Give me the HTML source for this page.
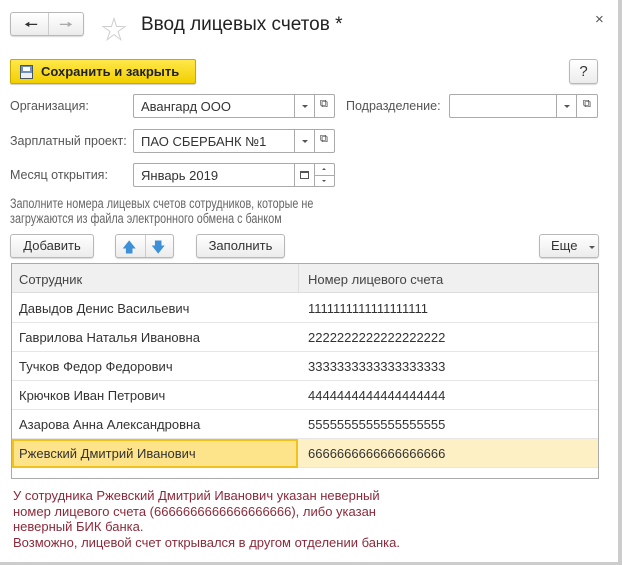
<!DOCTYPE html>
<html><head><meta charset="utf-8"><style>
*{box-sizing:border-box}
body{margin:0;width:622px;height:565px;background:#fff;font-family:"Liberation Sans","Noto Sans CJK SC",sans-serif;font-size:13px;color:#333;position:relative;overflow:hidden}
.a{position:absolute}
.btn{position:absolute;border:1px solid #b8b8b8;border-radius:3px;background:linear-gradient(#fff,#ececec);box-shadow:0 1px 1px rgba(0,0,0,.15);text-align:center;color:#333}
.fld{position:absolute;border:1px solid #aaa;border-radius:2px;background:#fff;height:24px}
.fld span{position:absolute;left:7px;top:4px;color:#333;font-size:13px}
.sep{position:absolute;top:0;bottom:0;border-left:1px solid #aaa}
.lbl{position:absolute;color:#555;font-size:12.5px}
.row{position:absolute;left:12px;width:586px;height:29px;border-bottom:1px solid #e6e6e6}
.row .c1{position:absolute;left:7px;top:7px}
.row .c2{position:absolute;left:296px;top:7px}
.dd{position:absolute;width:0;height:0;border-left:3px solid transparent;border-right:3px solid transparent;border-top:3px solid #555}
</style></head><body>
<div class="a" style="right:0;top:0;width:4px;height:565px;background:#ccc"></div>
<div class="a" style="left:0;bottom:0;width:622px;height:3px;background:#ccc"></div>
<div class="btn" style="left:10px;top:12px;width:74px;height:24px"><span class="a" style="left:13px;top:1px;font-size:16px;color:#333">&#129044;</span><div class="a" style="left:37px;top:0;height:22px;border-left:1px solid #ccc"></div><span class="a" style="left:48px;top:1px;font-size:16px;color:#aaa">&#129046;</span></div>
<div class="a" style="left:101px;top:10px;font-size:26px;color:#ccc">☆</div>
<div class="a" style="left:141px;top:14px;font-size:19px;color:#222">Ввод лицевых счетов *</div>
<div class="a" style="left:595px;top:11px;font-size:15px;color:#555">×</div>
<div class="a" style="left:10px;top:59px;width:186px;height:25px;border:1px solid #c9a800;border-radius:2px;background:linear-gradient(#ffe84a,#f2cf00);box-shadow:0 1px 1px rgba(0,0,0,.2)">
<div class="a" style="left:9px;top:5px;width:13px;height:14px;background:#6f8fbf;border:1px solid #456"><div class="a" style="left:2px;top:1px;width:7px;height:4px;background:#fff"></div><div class="a" style="left:0;top:7px;width:11px;height:5px;background:#eee"></div></div>
<div class="a" style="left:30px;top:4px;font-size:13px;font-weight:bold;color:#222">Сохранить и закрыть</div></div>
<div class="btn" style="left:569px;top:59px;width:29px;height:25px;font-size:15px;line-height:23px">?</div>
<div class="lbl" style="left:10px;top:99px">Организация:</div>
<div class="fld" style="left:133px;top:94px;width:202px"><span>Авангард ООО</span><div class="sep" style="left:160px"></div><div class="dd" style="left:168px;top:10px"></div><div class="sep" style="left:180px"></div><span style="left:186px;top:3px;font-size:11px">⧉</span></div>
<div class="lbl" style="left:346px;top:99px">Подразделение:</div>
<div class="fld" style="left:449px;top:94px;width:149px"><div class="sep" style="left:106px"></div><div class="dd" style="left:114px;top:10px"></div><div class="sep" style="left:126px"></div><span style="left:133px;top:3px;font-size:11px">⧉</span></div>
<div class="lbl" style="left:10px;top:134px">Зарплатный проект:</div>
<div class="fld" style="left:133px;top:129px;width:202px"><span>ПАО СБЕРБАНК №1</span><div class="sep" style="left:160px"></div><div class="dd" style="left:168px;top:10px"></div><div class="sep" style="left:180px"></div><span style="left:186px;top:3px;font-size:11px">⧉</span></div>
<div class="lbl" style="left:10px;top:168px">Месяц открытия:</div>
<div class="fld" style="left:133px;top:163px;width:202px"><span>Январь 2019</span><div class="sep" style="left:160px"></div><div class="a" style="left:166px;top:7px;width:9px;height:8px;border:1px solid #555;border-top-width:2px"></div><div class="sep" style="left:180px"></div><div class="a" style="left:180px;top:11px;width:21px;border-top:1px solid #aaa"></div><div class="a" style="left:188px;top:4px;border-left:2px solid transparent;border-right:2px solid transparent;border-bottom:2px solid #555"></div><div class="dd" style="left:188px;top:16px;border-left-width:2px;border-right-width:2px;border-top-width:2px"></div></div>
<div class="a" style="left:10px;top:196px;color:#666;font-size:13.5px;line-height:15px;transform:scaleX(0.8);transform-origin:0 0;white-space:nowrap">Заполните номера лицевых счетов сотрудников, которые не<br>загружаются из файла электронного обмена с банком</div>
<div class="btn" style="left:10px;top:234px;width:84px;height:24px;line-height:22px">Добавить</div>
<div class="btn" style="left:115px;top:234px;width:59px;height:24px"><div class="a" style="left:29px;top:0;height:22px;border-left:1px solid #ccc"></div><span class="a" style="left:6px;top:2px;color:#3d8fd8;font-size:14px">🡅</span><span class="a" style="left:35px;top:2px;color:#3d8fd8;font-size:14px">🡇</span></div>
<div class="btn" style="left:196px;top:234px;width:89px;height:24px;line-height:22px">Заполнить</div>
<div class="btn" style="left:539px;top:234px;width:60px;height:24px;line-height:22px;text-align:left;padding-left:11px">Еще<div class="dd" style="left:49px;top:11px"></div></div>
<div class="a" style="left:11px;top:263px;width:588px;height:216px;border:1px solid #aaa"></div>
<div class="a" style="left:12px;top:264px;width:586px;height:29px;background:#f0f0f0;border-bottom:1px solid #ddd"><div class="a" style="left:7px;top:8px;color:#444">Сотрудник</div><div class="a" style="left:286px;top:0;height:29px;border-left:1px solid #ddd"></div><div class="a" style="left:296px;top:8px;color:#444">Номер лицевого счета</div></div>
<div class="row" style="top:294px"><div class="c1">Давыдов Денис Васильевич</div><div class="c2">1111111111111111111</div></div>
<div class="row" style="top:323px"><div class="c1">Гаврилова Наталья Ивановна</div><div class="c2">2222222222222222222</div></div>
<div class="row" style="top:352px"><div class="c1">Тучков Федор Федорович</div><div class="c2">3333333333333333333</div></div>
<div class="row" style="top:381px"><div class="c1">Крючков Иван Петрович</div><div class="c2">4444444444444444444</div></div>
<div class="row" style="top:410px"><div class="c1">Азарова Анна Александровна</div><div class="c2">5555555555555555555</div></div>
<div class="row" style="top:439px;background:#fdf0c4"><div class="a" style="left:0;top:0;width:286px;height:29px;background:#fde38a;border:2px solid #f1c21b"></div><div class="c1">Ржевский Дмитрий Иванович</div><div class="c2">6666666666666666666</div></div>
<div class="a" style="left:13px;top:488px;color:#8b2a3a;font-size:13px;line-height:15.5px">У сотрудника Ржевский Дмитрий Иванович указан неверный<br>номер лицевого счета (6666666666666666666), либо указан<br>неверный БИК банка.<br>Возможно, лицевой счет открывался в другом отделении банка.</div>
</body></html>
